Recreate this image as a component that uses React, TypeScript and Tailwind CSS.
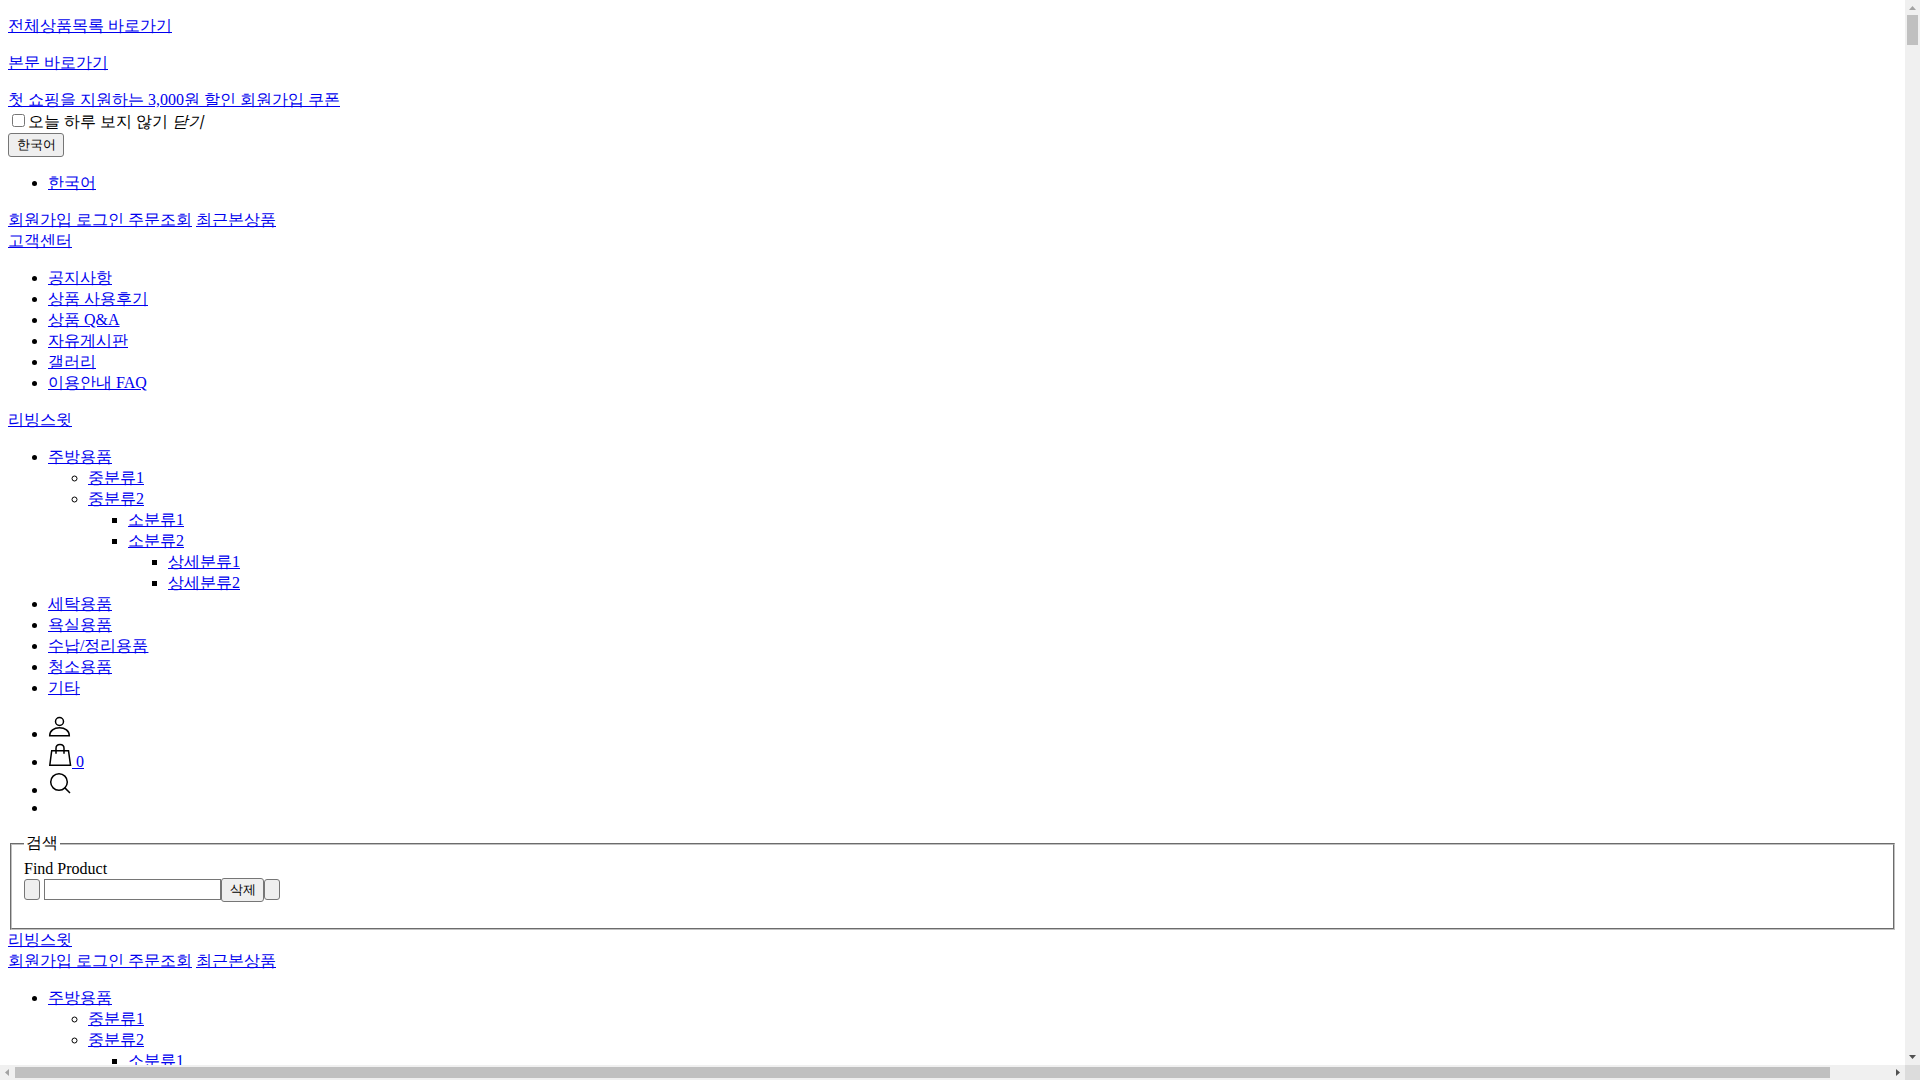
import type { ReactNode } from "react";

type Category = { name: string; children?: Category[] };

const categories: Category[] = [
  {
    name: "주방용품",
    children: [
      { name: "중분류1" },
      {
        name: "중분류2",
        children: [
          { name: "소분류1" },
          { name: "소분류2", children: [{ name: "상세분류1" }, { name: "상세분류2" }] },
        ],
      },
    ],
  },
  { name: "세탁용품" },
  { name: "욕실용품" },
  { name: "수납/정리용품" },
  { name: "청소용품" },
  { name: "기타" },
];

const boards = ["공지사항", "상품 사용후기", "상품 Q&A", "자유게시판", "갤러리", "이용안내 FAQ"];

const markers = ["list-disc", "list-[circle]", "list-[square]", "list-[square]"];

function Link({ children }: { children: ReactNode }) {
  return (
    <a href="#" className="text-[#0000ee] underline">
      {children}
    </a>
  );
}

function CategoryList({ items, depth = 0 }: { items: Category[]; depth?: number }) {
  return (
    <ul className={`${markers[depth]} pl-10 ${depth === 0 ? "mt-4" : ""}`}>
      {items.map((item) => (
        <li key={item.name}>
          <Link>{item.name}</Link>
          {item.children && <CategoryList items={item.children} depth={depth + 1} />}
        </li>
      ))}
    </ul>
  );
}

function MemberLinks() {
  return (
    <div>
      <a href="#" className="text-[#0000ee] underline">회원가입 </a>
      <a href="#" className="text-[#0000ee] underline">로그인 </a>
      <Link>주문조회</Link> <Link>최근본상품</Link>
    </div>
  );
}

const buttonLook =
  "rounded-[3px] border border-[#767676] bg-[#efefef] text-center text-[13px] font-['Liberation_Sans',sans-serif]";

function Icon({ children }: { children: ReactNode }) {
  return (
    <svg
      width="24"
      height="24"
      viewBox="0 1 24 24"
      fill="none"
      stroke="#000"
      strokeWidth="1.5"
      className="inline align-baseline"
      aria-hidden="true"
    >
      {children}
    </svg>
  );
}

function SearchForm() {
  return (
    <fieldset className="mx-0.5 border-2 border-[#c0c0c0] px-3 pt-[5px] pb-[26px] [border-style:groove]">
      <legend className="px-0.5 pb-[3px] leading-[19px]">검색</legend>
      <label htmlFor="keyword" className="block leading-[18px]">
        Find Product
      </label>
      <div className="flex h-6 items-start">
        <button type="button" aria-label="이전" className={`${buttonLook} mt-px mr-1 h-[21px] w-4`} />
        <input
          id="keyword"
          className="mt-px h-[21px] w-[177px] border border-[#767676] bg-white px-0.5 text-[13px]"
        />
        <button type="button" className={`${buttonLook} h-6 w-[43px] leading-[22px]`}>
          삭제
        </button>
        <button type="button" aria-label="검색" className={`${buttonLook} mt-px h-[21px] w-4`} />
      </div>
    </fieldset>
  );
}

function VerticalScrollbar() {
  return (
    <div className="flex flex-col items-center bg-[#f0f0f0]" aria-hidden="true">
      <svg width="15" height="15" viewBox="0 0 15 15" className="shrink-0" fill="#a3a3a3">
        <path d="M4 10h7L7.5 6z" />
      </svg>
      <div className="w-full flex-1 px-0.5">
        <div className="h-[30px] bg-[#c0c0c0]" />
      </div>
      <svg width="15" height="15" viewBox="0 0 15 15" className="shrink-0" fill="#505050">
        <path d="M4 5h7L7.5 9z" />
      </svg>
    </div>
  );
}

function HorizontalScrollbar() {
  return (
    <div className="flex bg-[#f0f0f0]" aria-hidden="true">
      <svg width="15" height="15" viewBox="0 0 15 15" className="shrink-0" fill="#a3a3a3">
        <path d="M9 4v7L5 7.5z" />
      </svg>
      <div className="flex-1 py-0.5">
        <div className="h-full w-[96.8%] bg-[#c0c0c0]" />
      </div>
      <svg width="15" height="15" viewBox="0 0 15 15" className="shrink-0" fill="#505050">
        <path d="M6 4v7L10 7.5z" />
      </svg>
    </div>
  );
}

export default function App() {
  return (
    <div
      lang="ko"
      className="grid h-screen grid-cols-[minmax(0,1fr)_15px] grid-rows-[minmax(0,1fr)_15px] bg-white font-['Liberation_Serif',serif] text-[16px] leading-[21px] text-black"
    >
      <main className="overflow-hidden px-2 pt-[15px]">
        <p className="mb-4">
          <Link>전체상품목록 바로가기</Link>
        </p>
        <p className="mb-4">
          <Link>본문 바로가기</Link>
        </p>
        <div>
          <Link>첫 쇼핑을 지원하는 3,000원 할인 회원가입 쿠폰</Link>
        </div>
        <div className="flex pt-px">
          <input
            id="hide-today"
            type="checkbox"
            className="mt-[3px] mr-[3px] ml-1 size-[13px]"
          />
          <label htmlFor="hide-today">오늘 하루 보지 않기</label>
          <em className="ml-1">닫기</em>
        </div>
        <button type="button" className={`${buttonLook} mt-px block h-6 w-14 leading-[22px]`}>
          한국어
        </button>
        <ul className="mt-[15px] mb-4 list-disc pl-10">
          <li>
            <Link>한국어</Link>
          </li>
        </ul>
        <MemberLinks />
        <div>
          <Link>고객센터</Link>
        </div>
        <ul className="my-4 list-disc pl-10">
          {boards.map((board) => (
            <li key={board}>
              <Link>{board}</Link>
            </li>
          ))}
        </ul>
        <div>
          <Link>리빙스윗</Link>
        </div>
        <CategoryList items={categories} />
        <ul className="mt-[17px] mb-4 list-disc pl-10 leading-[18px]">
          <li>
            <a href="#" aria-label="마이페이지">
              <Icon>
                <circle cx="11.5" cy="7.5" r="4" />
                <path d="M1.7 21.8C1.7 17 6 13.7 11.5 13.7S21.3 17 21.3 21.8Z" />
              </Icon>
            </a>
          </li>
          <li>
            <a href="#" className="text-[#0000ee] underline" aria-label="장바구니 0">
              <Icon>
                <path d="M3.7 8.7H20.5L22.5 23.2H1.8Z" />
                <path d="M8 11.7V6.3C8 1.1 16 1.1 16 6.3V11.7" />
              </Icon>
              {" 0"}
            </a>
          </li>
          <li>
            <a href="#" aria-label="검색">
              <Icon>
                <circle cx="11" cy="12" r="8.3" />
                <path d="M16.6 17.6L22 23" />
              </Icon>
            </a>
          </li>
          <li className="h-[18px]" />
        </ul>
        <SearchForm />
        <div className="leading-[20px]">
          <Link>리빙스윗</Link>
        </div>
        <MemberLinks />
        <CategoryList items={categories} />
      </main>
      <VerticalScrollbar />
      <HorizontalScrollbar />
      <div className="bg-[#dcdcdc]" />
    </div>
  );
}
